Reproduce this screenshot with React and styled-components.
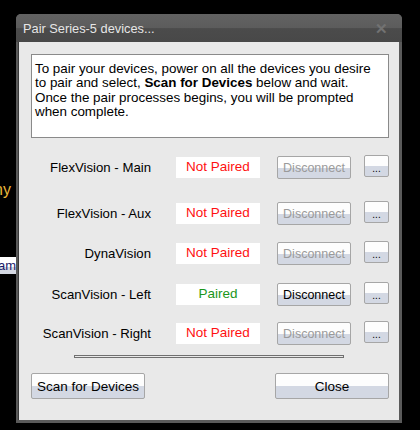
import React from 'react'
import styled, { createGlobalStyle } from 'styled-components'

const Global = createGlobalStyle`
  html, body {
    margin: 0;
    padding: 0;
    background: #000;
  }
  body {
    width: 420px;
    height: 430px;
    overflow: hidden;
    font-family: "Liberation Sans", Arial, sans-serif;
  }
`;

const Desktop = styled.div`
  position: relative;
  width: 420px;
  height: 430px;
  background: #000;
  overflow: hidden;
`;

const BehindText = styled.div`
  position: absolute;
  left: -6px;
  top: 181px;
  color: #e8b53a;
  font-size: 16px;
`;

const BehindButton = styled.div`
  position: absolute;
  left: -30px;
  top: 257px;
  width: 46px;
  height: 17px;
  padding-right: 4px;
  text-align: right;
  font-size: 13px;
  line-height: 17px;
  color: #1a1a6a;
  background: linear-gradient(#fff 0, #fff 60%, #d4d8e2 60%, #d4d8e2 100%);
`;

const Window = styled.div`
  position: absolute;
  left: 16px;
  top: 14px;
  width: 386px;
  height: 409px;
  display: flex;
  flex-direction: column;
  border-radius: 5px 5px 0 0;
  overflow: hidden;
  background: #5a5a5a;
`;

const TitleBar = styled.div`
  height: 27px;
  display: flex;
  align-items: center;
  justify-content: space-between;
  padding: 1px 14px 0 7px;
  background: linear-gradient(#626262 0, #5c5c5c 50%, #4b4b4b 52%, #484848 100%);
  color: #e6e6e6;
  font-family: "Liberation Sans", Arial, sans-serif;
  font-size: 12.8px;
`;

const CloseX = styled.span`
  color: #727272;
  font-size: 15px;
  font-weight: bold;
`;

const Body = styled.div`
  flex: 1;
  margin: 0 3px 3px 2px;
  background: #e9e9e9;
  padding: 12px 10px 0 12px;
  display: flex;
  flex-direction: column;
  border-left: 1px solid #3a3a3a;
`;

const InfoBox = styled.div`
  height: 70px;
  background: #fff;
  border: 1px solid #8a8a8a;
  padding: 7px 3px 5px;
  font-size: 13.4px;
  line-height: 14.3px;
  color: #000;
`;

const RowList = styled.div`
  display: flex;
  flex-direction: column;
`;

const Row = styled.div`
  display: flex;
  align-items: center;
  height: 22px;
  margin-top: ${p => p.$top}px;
`;

const Label = styled.div`
  width: 120px;
  flex-shrink: 0;
  text-align: right;
  font-size: 13.2px;
  color: #000;
`;

const Status = styled.div`
  margin-left: 25px;
  width: 84px;
  height: 21px;
  flex-shrink: 0;
  background: #fff;
  text-align: center;
  line-height: 19px;
  font-size: 13.5px;
  color: ${p => (p.$paired ? '#1b961b' : '#ff1010')};
`;

const Button = styled.button`
  box-sizing: border-box;
  flex-shrink: 0;
  border: 1px solid #a6a6a6;
  border-radius: 2px;
  background: linear-gradient(#fdfdfd 0, #fdfdfd 52%, #d3d8e3 52%, #d3d8e3 100%);
  font-family: "Liberation Sans", Arial, sans-serif;
  font-size: 13px;
  color: ${p => (p.disabled ? '#9a9a9a' : '#000')};
  padding: 0;
  cursor: default;
`;

const DisconnectButton = styled(Button)`
  margin-left: 17px;
  width: 74px;
  height: 23px;
  padding-top: 2px;
  font-size: 12.5px;
`;

const MoreButton = styled(Button)`
  margin-left: 13px;
  width: 25px;
  height: 22px;
  font-size: 10px;
  color: #000;
  padding-top: 4px;
  align-self: flex-start;
  margin-top: -1px;
`;

const Separator = styled.div`
  align-self: center;
  width: 268px;
  height: 1px;
  margin: 11px 0 0 -2px;
  border: 1px solid #707070;
  background: #e9e9e9;
`;

const Footer = styled.div`
  display: flex;
  justify-content: space-between;
  margin-top: 15px;
`;

const FooterButton = styled(Button)`
  width: 114px;
  height: 26px;
  font-size: 13.5px;
  padding-top: 1px;
`;

const devices = [
  { name: 'FlexVision - Main', paired: false, top: 18 },
  { name: 'FlexVision - Aux', paired: false, top: 24 },
  { name: 'DynaVision', paired: false, top: 18 },
  { name: 'ScanVision - Left', paired: true, top: 19 },
  { name: 'ScanVision - Right', paired: false, top: 17 },
];

export default function App() {
  return (
    <>
      <Global />
      <Desktop>
        <BehindText>ny</BehindText>
        <BehindButton>am</BehindButton>
        <Window>
          <TitleBar>
            <span>Pair Series-5 devices...</span>
            <CloseX>✕</CloseX>
          </TitleBar>
          <Body>
            <InfoBox>
              To pair your devices, power on all the devices you desire<br />
              to pair and select, <b>Scan for Devices</b> below and wait.<br />
              Once the pair processes begins, you will be prompted<br />
              when complete.
            </InfoBox>
            <RowList>
              {devices.map(d => (
                <Row key={d.name} $top={d.top}>
                  <Label>{d.name}</Label>
                  <Status $paired={d.paired}>{d.paired ? 'Paired' : 'Not Paired'}</Status>
                  <DisconnectButton disabled={!d.paired}>Disconnect</DisconnectButton>
                  <MoreButton>...</MoreButton>
                </Row>
              ))}
            </RowList>
            <Separator />
            <Footer>
              <FooterButton>Scan for Devices</FooterButton>
              <FooterButton>Close</FooterButton>
            </Footer>
          </Body>
        </Window>
      </Desktop>
    </>
  )
}
